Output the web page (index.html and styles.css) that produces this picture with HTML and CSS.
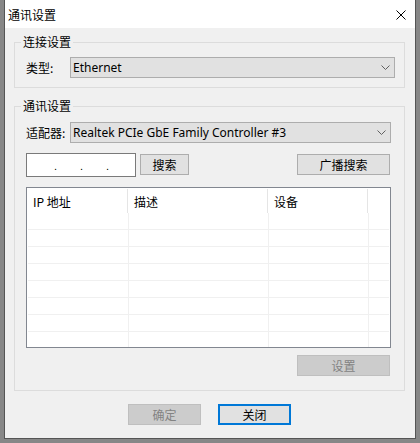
FILE: index.html
```html
<!DOCTYPE html>
<html>
<head>
<meta charset="utf-8">
<link rel="stylesheet" href="styles.css">
</head>
<body>
<div class="window">
  <div class="titlebar">
    <span class="title">通讯设置</span>
    <svg class="close" width="10" height="10" viewBox="0 0 10 10"><path d="M0.5 0.5 L9.5 9.5 M9.5 0.5 L0.5 9.5" stroke="#000" stroke-width="1" fill="none"/></svg>
  </div>
  <div class="content">
    <fieldset class="group group-conn">
      <legend>连接设置</legend>
      <div class="row">
        <span class="label">类型:</span>
        <div class="combo combo-type">
          <span>Ethernet</span>
          <svg width="9" height="5" viewBox="0 0 9 5"><path d="M0.5 0.5 L4.5 4.5 L8.5 0.5" stroke="#606060" fill="none"/></svg>
        </div>
      </div>
    </fieldset>
    <fieldset class="group group-comm">
      <legend>通讯设置</legend>
      <div class="row">
        <span class="label">适配器:</span>
        <div class="combo combo-adapter">
          <span>Realtek PCIe GbE Family Controller #3</span>
          <svg width="9" height="5" viewBox="0 0 9 5"><path d="M0.5 0.5 L4.5 4.5 L8.5 0.5" stroke="#606060" fill="none"/></svg>
        </div>
      </div>
      <div class="row ip-row">
        <div class="ipbox">
          <span class="f f1"></span><span class="dot">.</span><span class="f"></span><span class="dot">.</span><span class="f"></span><span class="dot">.</span><span class="f"></span>
        </div>
        <button class="btn btn-search">搜索</button>
        <span class="spacer"></span>
        <button class="btn btn-wide">广播搜索</button>
      </div>
      <div class="list">
        <div class="lhead">
          <span class="hc c1">IP 地址</span><span class="hc c2">描述</span><span class="hc c3">设备</span><span class="hc c4"></span>
        </div>
        <div class="lbody">
          <div class="lrow"><span class="bc c1"></span><span class="bc c2"></span><span class="bc c3"></span><span class="bc c4"></span></div>
          <div class="lrow"><span class="bc c1"></span><span class="bc c2"></span><span class="bc c3"></span><span class="bc c4"></span></div>
          <div class="lrow"><span class="bc c1"></span><span class="bc c2"></span><span class="bc c3"></span><span class="bc c4"></span></div>
          <div class="lrow"><span class="bc c1"></span><span class="bc c2"></span><span class="bc c3"></span><span class="bc c4"></span></div>
          <div class="lrow"><span class="bc c1"></span><span class="bc c2"></span><span class="bc c3"></span><span class="bc c4"></span></div>
          <div class="lrow"><span class="bc c1"></span><span class="bc c2"></span><span class="bc c3"></span><span class="bc c4"></span></div>
          <div class="lrow"><span class="bc c1"></span><span class="bc c2"></span><span class="bc c3"></span><span class="bc c4"></span></div>
          <div class="lrow"><span class="bc c1"></span><span class="bc c2"></span><span class="bc c3"></span><span class="bc c4"></span></div>
        </div>
      </div>
      <button class="btn btn-wide btn-disabled btn-settings">设置</button>
    </fieldset>
    <div class="footer">
      <button class="btn btn-foot btn-disabled">确定</button>
      <button class="btn btn-foot btn-default">关闭</button>
    </div>
  </div>
</div>
</body>
</html>
```
FILE: styles.css
```css
html, body {
  margin: 0;
  padding: 0;
}
body {
  background: #878787;
  font-family: "Segoe UI", "Noto Sans", "Noto Sans CJK SC", sans-serif;
  font-size: 12px;
  color: #000;
  width: 420px;
  height: 443px;
  overflow: hidden;
}
.window {
  margin-left: 4px;
  width: 412px;
  height: 439px;
  box-sizing: border-box;
  border: 1px solid #555;
  border-top: none;
  background: #f0f0f0;
  display: flex;
  flex-direction: column;
}
.titlebar {
  height: 28px;
  flex: none;
  background: #fff;
  display: flex;
  align-items: center;
  justify-content: space-between;
  padding: 2px 9px 0 3px;
  box-sizing: border-box;
}
.title {
  font-family: "Noto Sans CJK SC", sans-serif;
  font-size: 12px;
  line-height: 16px;
}
.close {
  display: block;
}
.content {
  display: flex;
  flex-direction: column;
  padding: 6px 10px 0 9px;
}
.group {
  margin: 0;
  border: 1px solid #dcdcdc;
  min-width: 0;
  display: flex;
  flex-direction: column;
}
.group legend {
  font-family: "Noto Sans CJK SC", sans-serif;
  font-size: 12px;
  line-height: 16px;
  padding: 0 2px;
  margin-left: -5px;
}
.group-conn {
  padding: 7px 9px 9px 11px;
}
.group-comm {
  margin-top: 10px;
  padding: 8px 13px 14px 11px;
}
.row {
  display: flex;
  align-items: center;
}
.label {
  width: 44px;
  flex: none;
  font-family: "Noto Sans CJK SC", sans-serif;
  line-height: 16px;
}
.combo {
  box-sizing: border-box;
  height: 21px;
  background: #e1e1e1;
  border: 1px solid #adadad;
  display: flex;
  align-items: center;
  justify-content: space-between;
  padding: 0 4px 0 2px;
  line-height: 16px;
  color: #000;
}
.combo svg {
  display: block;
}
.combo-type {
  width: 325px;
}
.combo-adapter {
  width: 321px;
  padding-right: 4px;
}
.ip-row {
  margin-top: 10px;
  align-items: flex-start;
}
.ipbox {
  box-sizing: border-box;
  width: 110px;
  height: 24px;
  background: #fff;
  border: 1px solid #7a7a7a;
  display: flex;
  align-items: center;
  line-height: 16px;
  padding-top: 1px;
}
.ipbox .f {
  width: 23px;
  flex: none;
}
.ipbox .f1 {
  width: 27px;
}
.ipbox .dot {
  width: 3px;
  text-align: center;
  font-family: "Liberation Sans", sans-serif;
  font-size: 11px;
  flex: none;
}
.btn {
  box-sizing: border-box;
  height: 21px;
  margin: 0;
  padding: 0;
  background: #e1e1e1;
  border: 1px solid #adadad;
  font-family: "Noto Sans CJK SC", sans-serif;
  font-size: 12px;
  line-height: 16px;
  color: #000;
  flex: none;
}
.btn-search {
  width: 49px;
  margin-left: 4px;
  margin-top: 1px;
}
.spacer {
  flex: 1;
}
.btn-wide {
  width: 93px;
  margin-right: 1px;
}
.ip-row .btn-wide {
  margin-top: 1px;
}
.btn-disabled {
  background: #cccccc;
  border-color: #bfbfbf;
  color: #838383;
}
.btn-settings {
  align-self: flex-end;
  margin-top: 7px;
}
.list {
  margin-top: 10px;
  box-sizing: border-box;
  height: 161px;
  border: 1px solid #828790;
  background: #fff;
  display: flex;
  flex-direction: column;
  overflow: hidden;
}
.lhead {
  display: flex;
  height: 25px;
  flex: none;
  padding-top: 1px;
  box-sizing: border-box;
}
.hc {
  box-sizing: border-box;
  height: 24px;
  padding: 5px 0 0 6px;
  font-family: "Noto Sans CJK SC", sans-serif;
  line-height: 16px;
  border-right: 1px solid #e5e5e5;
  flex: none;
}
.lhead .c1 { width: 101px; }
.lhead .c2 { width: 140px; }
.lhead .c3 { width: 100px; }
.lhead .c4 { flex: 1; border-right: none; }
.lbody {
  flex: 1;
  overflow: hidden;
  margin: 0 1px;
}
.lrow {
  display: flex;
  height: 17px;
  box-sizing: border-box;
  border-bottom: 1px solid #f0f0f0;
}
.bc {
  height: 16px;
  border-right: 1px solid #f0f0f0;
  flex: none;
}
.lrow .c1 { width: 101px; box-sizing: border-box; }
.lrow .c2 { width: 140px; box-sizing: border-box; }
.lrow .c3 { width: 100px; box-sizing: border-box; }
.lrow .c4 { flex: 1; border-right: none; }
.footer {
  margin-top: 13px;
  display: flex;
  justify-content: center;
  gap: 17px;
}
.btn-foot {
  width: 73px;
}
.btn-default {
  border: 2px solid #0078d7;
}
```
